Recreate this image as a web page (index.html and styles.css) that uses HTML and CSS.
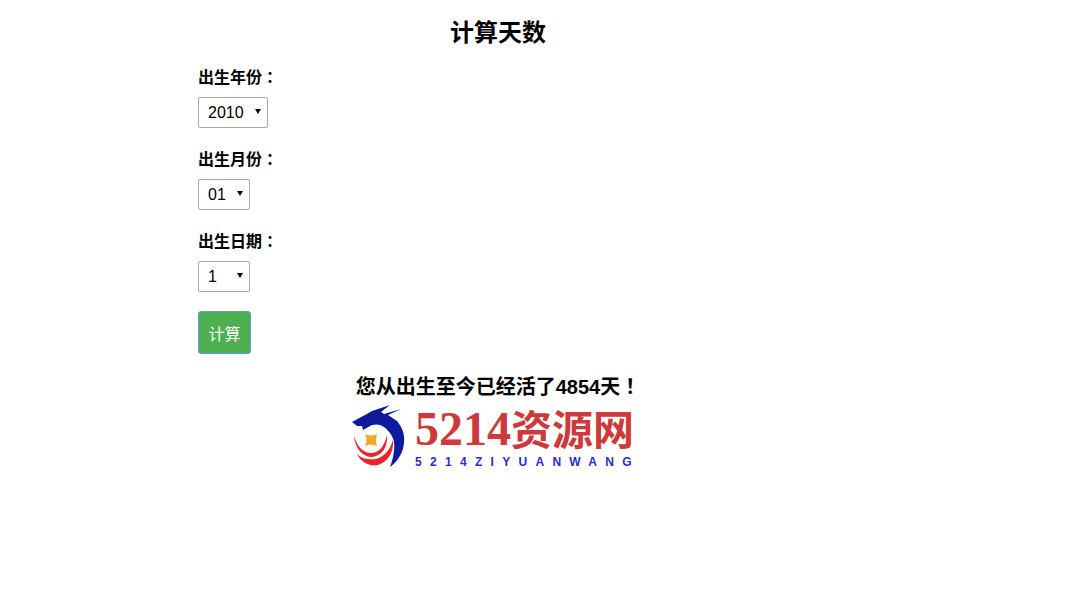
FILE: index.html
```html
<!DOCTYPE html>
<html lang="zh-CN">
<head>
    <meta charset="UTF-8">
    <meta name="viewport" content="width=device-width, initial-scale=1.0">
    <title>计算天数</title>
    <link rel="stylesheet" href="styles.css">
</head>
<body>
    <div class="container">
        <h2>计算天数</h2>
        <form class="age-form">
            <label for="year">出生年份<span class="punct" lang="zh-TW">：</span></label>
            <select id="year" class="select-year">
                <option>2010</option>
            </select>
            <label for="month">出生月份<span class="punct" lang="zh-TW">：</span></label>
            <select id="month" class="select-small">
                <option>01</option>
            </select>
            <label for="day">出生日期<span class="punct" lang="zh-TW">：</span></label>
            <select id="day" class="select-small">
                <option>1</option>
            </select>
            <button type="button">计算</button>
        </form>
        <h3>您从出生至今已经活了4854天<span class="punct" lang="zh-TW">！</span></h3>

        <!-- logo: dragon mark, then site name -->
        <div class="logo">
            <svg class="logo-mark" width="54" height="62" viewBox="0 0 54 62">
                <path fill="#0f1a9c" d="M0 17 L13 10 L20 6 L38 0 L29 7 L32 9 L49 4 L36 10 L45 16 C51 23 53 31 52 38 C51 48 46 56 38 62 C41 54 43 45 42 37 C41 31 37 26 32 22 C28 19 24 19 20 20 L11 25 L10 21 L5 21 Z"/>
                <path fill="#e8242c" d="M4 36 C7 44 13 48 19 48 C26 48 32 43 35 30 C36 42 30 51 20 52 C11 52 3 44 2 31 Z"/>
                <path fill="#e8242c" d="M5 49 C10 54 18 55 24 54 C32 52 38 45 41 35 C42 47 36 57 26 60 C17 62 9 57 5 49 Z"/>
                <path fill="#f5a623" d="M13 29 Q19 32 25 29 Q23 35 25 41 Q19 38 13 41 Q16 35 13 29 Z"/>
            </svg>
            <div class="logo-text">
                <div class="logo-name"><span class="logo-digits">5214</span>资源网</div>
                <div class="logo-sub">5214ZIYUANWANG</div>
            </div>
        </div>
    </div>
</body>
</html>
```

FILE: styles.css
```css
body {
    font-family: "Liberation Sans", Arial, "Noto Sans CJK SC", sans-serif;
    margin: 0;
    color: #000;
    background: #fff;
}
.container {
    width: 600px;
    margin-left: 198px;
    padding-top: 19px;
}
h2 {
    margin: 0 0 21px;
    font-size: 24px;
    line-height: 28px;
    text-align: center;
}
/* TC glyphs keep the colon and exclamation mark in the middle of the cell */
.punct {
    font-family: "Noto Sans CJK TC", sans-serif;
    line-height: 1;
}
.age-form {
    display: flex;
    flex-direction: column;
    align-items: flex-start;
}
label {
    font-size: 16px;
    font-weight: bold;
    line-height: 20px;
    margin-bottom: 9px;
}
select {
    appearance: none;
    -webkit-appearance: none;
    height: 31px;
    margin-bottom: 22px;
    padding: 0 0 0 9px;
    border: 1px solid #a9a9a9;
    border-radius: 2px;
    font-family: inherit;
    font-size: 16px;
    color: #000;
    background: #fff url("data:image/svg+xml,%3Csvg xmlns='http://www.w3.org/2000/svg' width='6' height='5'%3E%3Cpath d='M0 0h6L3 5z' fill='%23000'/%3E%3C/svg%3E") no-repeat;
}
.select-year {
    width: 70px;
    background-position: 56px 11px;
}
.select-small {
    width: 52px;
    background-position: 38px 11px;
}
button {
    width: 53px;
    height: 43px;
    margin-top: -3px;
    padding: 0;
    border: 1px solid #5f9fdc;
    border-radius: 3px;
    background-color: #4caf50;
    color: #fff;
    font-family: inherit;
    font-size: 16px;
}
h3 {
    margin: 21px 0 6px;
    font-size: 20px;
    line-height: 24px;
    text-align: center;
}
.logo {
    display: flex;
    align-items: flex-start;
    gap: 9px;
    width: 284px;
    margin-left: 154px;
}
.logo-mark {
    flex: none;
}
.logo-name {
    font-family: "Liberation Serif", "Noto Sans CJK SC", serif;
    font-size: 41px;
    font-weight: bold;
    line-height: 48px;
    color: #cc3a3a;
    white-space: nowrap;
}
.logo-digits {
    font-size: 48px;
}
.logo-sub {
    font-size: 12px;
    font-weight: bold;
    line-height: 14px;
    letter-spacing: 8.3px;
    color: #2b2bd6;
    white-space: nowrap;
}
```
